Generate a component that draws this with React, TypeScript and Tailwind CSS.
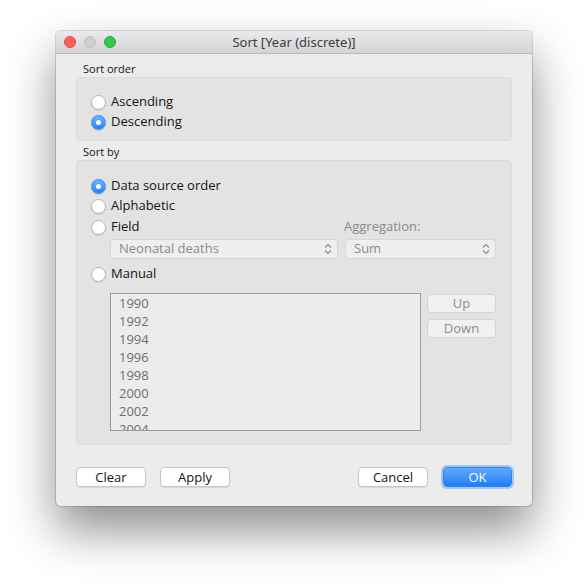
import { useState } from "react";

const years = ["1990", "1992", "1994", "1996", "1998", "2000", "2002", "2004"];

function Radio({ checked, label, onClick }: { checked: boolean; label: string; onClick?: () => void }) {
  return (
    <div className="flex items-center h-5 gap-[5px] cursor-default" onClick={onClick}>
      {checked ? (
        <span className="w-[15px] h-[15px] rounded-full bg-gradient-to-b from-[#6bb2fa] to-[#1d83fb] border border-[#3c8ef0] flex items-center justify-center shadow-[0_1px_1px_rgba(0,0,0,0.12)]">
          <span className="w-[5px] h-[5px] rounded-full bg-white" />
        </span>
      ) : (
        <span className="w-[15px] h-[15px] rounded-full bg-white border border-[#b3b3b3] shadow-[0_1px_1px_rgba(0,0,0,0.08)]" />
      )}
      <span className="text-[13px] text-[#141414]">{label}</span>
    </div>
  );
}

function Chevrons() {
  return (
    <svg width="8" height="12" viewBox="0 0 8 12" fill="none" stroke="#8d8d8d" strokeWidth="1.2">
      <path d="M1 4.5 L4 1.5 L7 4.5" />
      <path d="M1 7.5 L4 10.5 L7 7.5" />
    </svg>
  );
}

function Popup({ value, width }: { value: string; width: string }) {
  return (
    <div className={`${width} h-5 rounded-[4px] bg-[#efefef] border border-[#d6d6d6] flex items-center justify-between pl-2 pr-[5px] text-[13px] text-[#8a8a8a]`}>
      <span>{value}</span>
      <Chevrons />
    </div>
  );
}

function Button({ label, className = "" }: { label: string; className?: string }) {
  return (
    <button className={`w-[70px] h-5 rounded-[4px] bg-white border border-[#c6c6c6] shadow-[0_1px_0_rgba(0,0,0,0.08)] text-[13px] text-[#141414] leading-none ${className}`}>
      {label}
    </button>
  );
}

export default function App() {
  const [order, setOrder] = useState("desc");
  const [by, setBy] = useState("source");

  return (
    <div className="min-h-screen bg-white pt-[31px] pl-[56px]" style={{ fontFamily: '"Open Sans", "Liberation Sans", sans-serif' }}>
      <div className="w-[476px] h-[475px] rounded-[5px] bg-[#ececec] flex flex-col shadow-[0_0_0_1px_rgba(0,0,0,0.14),0_24px_48px_rgba(0,0,0,0.45)] overflow-hidden">
        {/* title bar */}
        <div className="h-[23px] shrink-0 relative flex items-center justify-center bg-gradient-to-b from-[#ebe9eb] to-[#d5d3d5] border-b border-[#b9b9b9]">
          <div className="absolute left-[8px] top-[5px] flex gap-2">
            <span className="w-3 h-3 rounded-full bg-[#fc605c] border border-[#de4a45]" />
            <span className="w-3 h-3 rounded-full bg-[#d0d0d0] border border-[#bdbdbd]" />
            <span className="w-3 h-3 rounded-full bg-[#34c84a] border border-[#24a73a]" />
          </div>
          <span className="text-[13px] text-[#3b3b3b] leading-none" style={{ fontFamily: '"Noto Sans", "Open Sans", sans-serif' }}>
            Sort [Year (discrete)]
          </span>
        </div>

        <div className="flex-1 flex flex-col px-5 pb-[19px]">
          <div className="text-[11px] text-[#141414] pl-[7px] mt-[8px] h-[14px] leading-[14px]">Sort order</div>
          <div className="mt-[1px] h-[64px] rounded-[4px] bg-[#e3e3e3] border border-[#dbdbdb] pl-[14px] pt-[14px]">
            <Radio checked={order === "asc"} label="Ascending" onClick={() => setOrder("asc")} />
            <Radio checked={order === "desc"} label="Descending" onClick={() => setOrder("desc")} />
          </div>

          <div className="text-[11px] text-[#141414] pl-[7px] mt-[4px] h-[14px] leading-[14px]">Sort by</div>
          <div className="mt-[1px] h-[285px] rounded-[4px] bg-[#e3e3e3] border border-[#dbdbdb] pt-[15px] pr-[15px] flex flex-col">
            <div className="pl-[14px]">
              <Radio checked={by === "source"} label="Data source order" onClick={() => setBy("source")} />
              <Radio checked={by === "alpha"} label="Alphabetic" onClick={() => setBy("alpha")} />
              <div className="flex items-center mt-[1px]">
                <div className="w-[240px]">
                  <Radio checked={by === "field"} label="Field" onClick={() => setBy("field")} />
                </div>
                <span className="text-[13px] text-[#8a8a8a] ml-[13px]">Aggregation:</span>
              </div>
            </div>
            <div className="pl-[33px] mt-[2px] flex gap-[7px]">
              <Popup value="Neonatal deaths" width="w-[228px]" />
              <Popup value="Sum" width="w-[151px]" />
            </div>
            <div className="pl-[14px] mt-[5px]">
              <Radio checked={by === "manual"} label="Manual" onClick={() => setBy("manual")} />
            </div>
            <div className="pl-[33px] mt-[9px] flex gap-[6px]">
              <div className="w-[311px] h-[138px] bg-[#ececec] border border-[#9b9b9b] overflow-hidden pl-2">
                {years.map((y) => (
                  <div key={y} className="text-[13px] leading-[18px] text-[#6e6e6e]">{y}</div>
                ))}
              </div>
              <div className="flex flex-col gap-[6px] pt-[1px]">
                <button className="w-[69px] h-[19px] rounded-[4px] bg-[#f1f1f1] border border-[#d3d3d3] text-[13px] text-[#8c8c8c] leading-none">Up</button>
                <button className="w-[69px] h-[19px] rounded-[4px] bg-[#f1f1f1] border border-[#d3d3d3] text-[13px] text-[#8c8c8c] leading-none">Down</button>
              </div>
            </div>
          </div>

          <div className="mt-auto flex items-center">
            <Button label="Clear" />
            <Button label="Apply" className="ml-[14px]" />
            <Button label="Cancel" className="ml-auto" />
            <button className="ml-[15px] w-[69px] h-5 rounded-[4px] bg-gradient-to-b from-[#62aaf9] to-[#1c7ef5] border border-[#2d84ea] text-[13px] text-white leading-none shadow-[0_0_0_2px_rgba(110,165,240,0.55)]">
              OK
            </button>
          </div>
        </div>
      </div>
    </div>
  );
}
